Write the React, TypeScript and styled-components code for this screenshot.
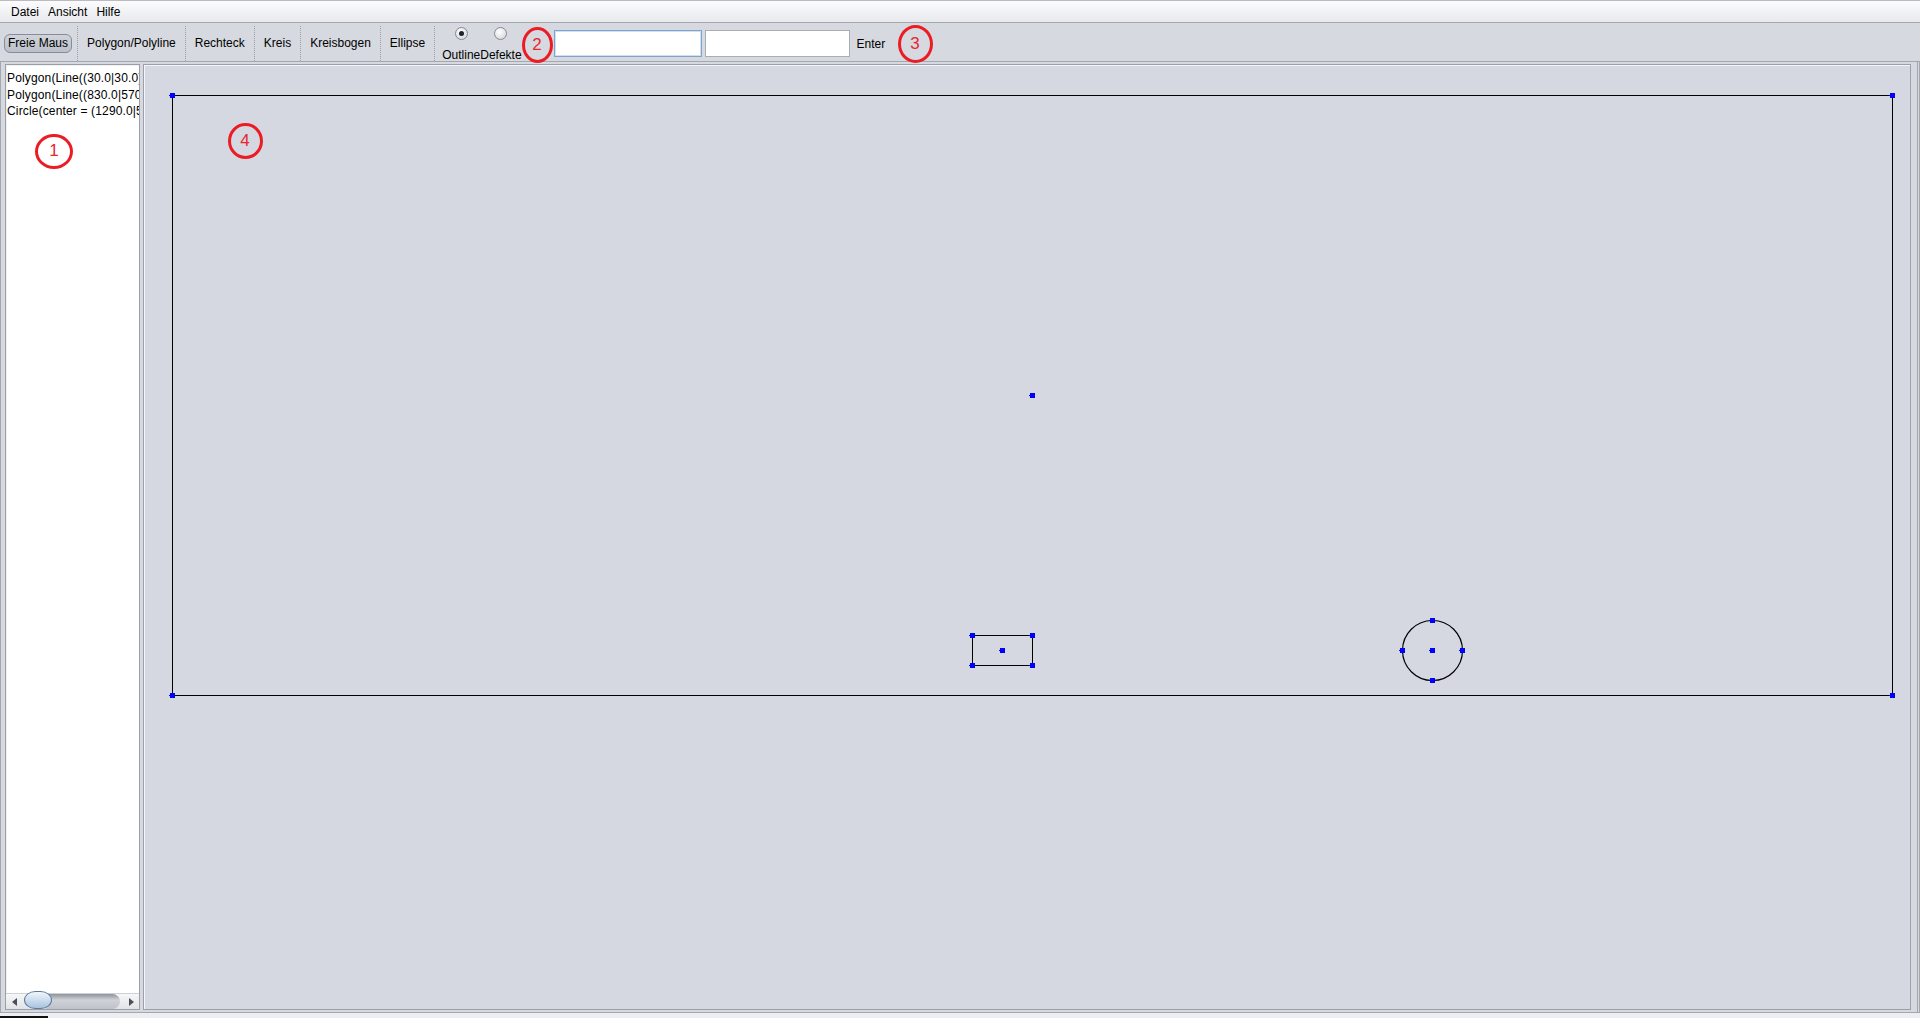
import React from 'react';
import styled, { createGlobalStyle } from 'styled-components';

const GlobalStyle = createGlobalStyle`
  html, body {
    margin: 0;
    padding: 0;
  }
  body {
    overflow: hidden;
    background: #d6d9df;
    font-family: "Liberation Sans", Arial, sans-serif;
    font-size: 12px;
  }
`;

const Window = styled.div`
  position: relative;
  width: 1920px;
  height: 1018px;
  display: flex;
  flex-direction: column;
  background: #d6d9df;
  color: #000;
  font-family: "Liberation Sans", Arial, sans-serif;
  font-size: 12px;
`;

const MenuBar = styled.div`
  height: 22px;
  box-sizing: border-box;
  display: flex;
  align-items: center;
  gap: 9px;
  padding-left: 11px;
  border-top: 1px solid #b8bbc1;
  background: linear-gradient(#fcfcfd, #e7e9ed);
`;

const MenuItem = styled.span`
  line-height: 14px;
`;

const ToolBar = styled.div`
  height: 40px;
  box-sizing: border-box;
  display: flex;
  align-items: center;
  padding: 3px 0 0 4px;
  border-top: 1px solid #a3a7ae;
  border-bottom: 1px solid #a3a7ae;
`;

const ToolButton = styled.div<{ $active?: boolean }>`
  height: 19px;
  box-sizing: border-box;
  padding: 0 3px;
  line-height: 17px;
  white-space: nowrap;
  border-radius: 6px;
  border: 1px solid ${(p) => (p.$active ? '#868d98' : 'transparent')};
  background: ${(p) =>
    p.$active ? 'linear-gradient(#d0d4da, #bac0c9)' : 'transparent'};
`;

const Separator = styled.div<{ $wide?: boolean }>`
  align-self: stretch;
  width: 0;
  margin: 0 ${(p) => (p.$wide ? 7 : 5)}px 0 5px;
  border-left: 1px dotted #9aa0a8;
`;

const RadioColumn = styled.label`
  display: flex;
  flex-direction: column;
  align-items: center;
  gap: 8px;
  margin-top: 2px;
  line-height: 14px;
`;

const RadioMark = styled.span<{ $checked?: boolean }>`
  width: 13px;
  height: 13px;
  box-sizing: border-box;
  border-radius: 50%;
  border: 1px solid #858a92;
  background: radial-gradient(circle at 40% 35%, #ffffff, #d9dce1 75%);
  display: flex;
  align-items: center;
  justify-content: center;

  &::after {
    content: '';
    width: 5px;
    height: 5px;
    border-radius: 50%;
    background: ${(p) => (p.$checked ? '#1c2127' : 'transparent')};
  }
`;

const FieldGroup = styled.div`
  display: flex;
  align-items: center;
  gap: 3px;
  margin-left: 32px;
`;

const TextField = styled.div<{ $focused?: boolean; $width: number }>`
  width: ${(p) => p.$width}px;
  height: 27px;
  box-sizing: border-box;
  background: #fff;
  border: 1px solid ${(p) => (p.$focused ? '#7ea3cf' : '#a9adb4')};
  box-shadow: ${(p) => (p.$focused ? 'inset 0 0 0 1px #cfe0f2' : 'none')};
`;

const EnterLabel = styled.span`
  margin-left: 7px;
`;

const Split = styled.div`
  flex: 1;
  min-height: 0;
  display: flex;
  padding: 2px 6px 2px 4px;
  border-left: 1px solid #a3a7ae;
  border-right: 3px double #a3a7ae;
  box-sizing: border-box;
`;

const ListPanel = styled.div`
  width: 135px;
  box-sizing: border-box;
  display: flex;
  flex-direction: column;
  border: 1px solid #9ba0a8;
  box-shadow: inset 1px 1px 0 #eef0f2;
`;

const ListBody = styled.div`
  flex: 1;
  overflow: hidden;
  margin: 1px 0 0 1px;
  padding-top: 4px;
  background: #fff;
`;

const ListLine = styled.div`
  white-space: nowrap;
  line-height: 16.5px;
  letter-spacing: 0.15px;
`;

const HScrollBar = styled.div`
  height: 15px;
  display: flex;
  background: linear-gradient(#f6f7f8, #e1e3e7);
  border-top: 1px solid #cdd0d5;
`;

const ScrollArrow = styled.div<{ $dir: 'left' | 'right' }>`
  width: 16px;
  display: flex;
  align-items: center;
  justify-content: center;

  &::before {
    content: '';
    border-top: 4px solid transparent;
    border-bottom: 4px solid transparent;
    ${(p) =>
      p.$dir === 'left'
        ? 'border-right: 5px solid #4b5057;'
        : 'border-left: 5px solid #4b5057;'}
  }
`;

const ScrollTrack = styled.div`
  flex: 1;
  display: flex;
  align-items: stretch;
  padding-left: 2px;
`;

const ScrollThumb = styled.div`
  width: 28px;
  box-sizing: border-box;
  margin-top: -3px;
  border: 1px solid #5d7997;
  border-radius: 14px / 11px;
  background: linear-gradient(#f1f6fb, #c4d8ec 60%, #a9c3de);
  position: relative;
  z-index: 1;
`;

const ScrollShade = styled.div`
  flex: 1;
  margin-left: -6px;
  margin-right: 3px;
  border-radius: 0 8px 8px 0;
  background: linear-gradient(#8f939a, #cfd2d7 40%, #bfc2c8);
`;

const Divider = styled.div`
  width: 3px;
`;

const Canvas = styled.div`
  flex: 1;
  position: relative;
  border: 1px solid #9ba0a8;
  box-shadow: inset 1px 1px 0 #f4f5f7;
  background: #d5d8e0;
  overflow: hidden;

  svg {
    display: block;
    width: 100%;
    height: 100%;
  }
`;

const BottomStrip = styled.div`
  height: 6px;
  box-sizing: border-box;
  border-top: 1px solid #a3a7ae;
  background: #eceef1;
  display: flex;
  align-items: flex-end;
`;

const TaskMark = styled.div`
  width: 48px;
  height: 2px;
  background: #111;
`;

const Annotation = styled.div<{ $x: number; $y: number; $w: number; $h: number }>`
  position: absolute;
  left: ${(p) => p.$x - p.$w / 2}px;
  top: ${(p) => p.$y - p.$h / 2}px;
  width: ${(p) => p.$w}px;
  height: ${(p) => p.$h}px;
  box-sizing: border-box;
  border: 3px solid #ec1c24;
  border-radius: 50%;
  color: #e8262e;
  font-family: "Liberation Sans", Arial, sans-serif;
  font-size: 17px;
  display: flex;
  align-items: center;
  justify-content: center;
  pointer-events: none;
`;

const tools = ['Freie Maus', 'Polygon/Polyline', 'Rechteck', 'Kreis', 'Kreisbogen', 'Ellipse'];

const shapeList = [
  'Polygon(Line((30.0|30.0),(1750.0|30.0)), Line((1750.0|30.0),(1750.0|630.0)), Line((1750.0|630.0),(30.0|630.0)), Line((30.0|630.0),(30.0|30.0)))',
  'Polygon(Line((830.0|570.0),(890.0|570.0)), Line((890.0|570.0),(890.0|600.0)), Line((890.0|600.0),(830.0|600.0)), Line((830.0|600.0),(830.0|570.0)))',
  'Circle(center = (1290.0|585.0), radius = 30.0)',
];

const handles: [number, number][] = [
  [30, 30], [1750, 30], [30, 630], [1750, 630], [890, 330],
  [830, 570], [890, 570], [830, 600], [890, 600], [860, 585],
  [1290, 585], [1260, 585], [1320, 585], [1290, 555], [1290, 615],
];

const annotations = [
  { n: '1', x: 54, y: 151, w: 38, h: 35 },
  { n: '2', x: 537, y: 45, w: 31, h: 36 },
  { n: '3', x: 915, y: 44, w: 35, h: 38 },
  { n: '4', x: 245, y: 141, w: 35, h: 36 },
];

function Handle({ x, y }: { x: number; y: number }) {
  return (
    <>
      <rect x={x - 2} y={y - 2} width={5} height={5} fill="#0000ff" />
      <rect x={x - 3} y={y} width={1} height={1} fill="#0000ff" />
    </>
  );
}

export default function App() {
  return (
    <Window>
      <GlobalStyle />
      <MenuBar>
        <MenuItem>Datei</MenuItem>
        <MenuItem>Ansicht</MenuItem>
        <MenuItem>Hilfe</MenuItem>
      </MenuBar>

      <ToolBar>
        {tools.map((tool, index) => (
          <React.Fragment key={tool}>
            {index > 0 && <Separator />}
            <ToolButton $active={index === 0}>{tool}</ToolButton>
          </React.Fragment>
        ))}
        <Separator $wide />
        <RadioColumn>
          <RadioMark $checked />
          Outline
        </RadioColumn>
        <RadioColumn>
          <RadioMark />
          Defekte
        </RadioColumn>
        <FieldGroup>
          <TextField $focused $width={148} />
          <TextField $width={145} />
        </FieldGroup>
        <EnterLabel>Enter</EnterLabel>
      </ToolBar>

      <Split>
        <ListPanel>
          <ListBody>
            {shapeList.map((line) => (
              <ListLine key={line}>{line}</ListLine>
            ))}
          </ListBody>
          <HScrollBar>
            <ScrollArrow $dir="left" />
            <ScrollTrack>
              <ScrollThumb />
              <ScrollShade />
            </ScrollTrack>
            <ScrollArrow $dir="right" />
          </HScrollBar>
        </ListPanel>
        <Divider />
        <Canvas>
          <svg shapeRendering="crispEdges">
            <g transform="translate(-2,0)">
              <rect x={30.5} y={30.5} width={1720} height={600} fill="none" stroke="#000" strokeWidth={1} />
              <rect x={830.5} y={570.5} width={60} height={30} fill="none" stroke="#000" strokeWidth={1} />
              <circle
                cx={1290.5}
                cy={585.5}
                r={30}
                fill="none"
                stroke="#000"
                strokeWidth={1.2}
                shapeRendering="geometricPrecision"
              />
              {handles.map(([x, y]) => (
                <Handle key={`${x}-${y}`} x={x} y={y} />
              ))}
            </g>
          </svg>
        </Canvas>
      </Split>

      <BottomStrip>
        <TaskMark />
      </BottomStrip>

      {annotations.map((a) => (
        <Annotation key={a.n} $x={a.x} $y={a.y} $w={a.w} $h={a.h}>
          {a.n}
        </Annotation>
      ))}
    </Window>
  );
}
